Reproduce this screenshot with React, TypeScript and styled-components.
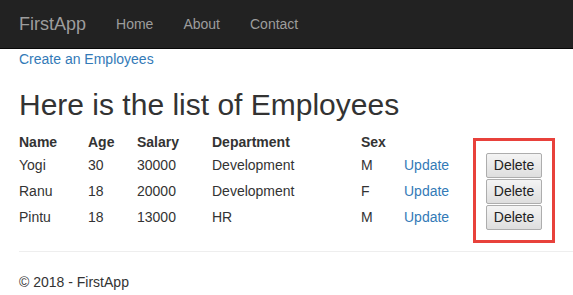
import styled, { createGlobalStyle } from "styled-components";

type Employee = {
  name: string;
  age: number;
  salary: number;
  department: string;
  sex: string;
};

const employees: Employee[] = [
  { name: "Yogi", age: 30, salary: 30000, department: "Development", sex: "M" },
  { name: "Ranu", age: 18, salary: 20000, department: "Development", sex: "F" },
  { name: "Pintu", age: 18, salary: 13000, department: "HR", sex: "M" },
];

const columns = [
  { label: "Name", width: 69 },
  { label: "Age", width: 49 },
  { label: "Salary", width: 75 },
  { label: "Department", width: 149 },
  { label: "Sex", width: 43 },
  { label: "", width: 82 },
  { label: "", width: 70 },
];

const GlobalStyle = createGlobalStyle`
  html, body {
    margin: 0;
    padding: 0;
    background: #ffffff;
    font-family: "Liberation Sans", Arial, Helvetica, sans-serif;
    font-size: 14px;
    line-height: 20px;
    color: #333333;
  }
  * {
    box-sizing: border-box;
  }
`;

const Navbar = styled.nav`
  height: 49px;
  background: #222222;
  border-bottom: 1px solid #080808;
  display: flex;
  align-items: center;
  padding-left: 19px;
`;

const Brand = styled.a`
  font-size: 18px;
  line-height: 20px;
  color: #9d9d9d;
  padding-right: 15px;
  text-decoration: none;
`;

const NavLink = styled.a`
  font-size: 14px;
  line-height: 20px;
  color: #9d9d9d;
  padding: 0 15px;
  text-decoration: none;
`;

const Content = styled.main`
  padding-left: 19px;
`;

const TopLink = styled.p`
  margin: 0 0 10px;
`;

const Link = styled.a`
  color: #337ab7;
  text-decoration: none;
`;

const Heading = styled.h2`
  margin: 19px 0 11px;
  font-size: 30px;
  font-weight: 500;
  line-height: 33px;
`;

const TableWrap = styled.div`
  position: relative;
  margin-bottom: 21px;
`;

const Table = styled.table`
  border-collapse: collapse;
  border-spacing: 0;
`;

const HeadCell = styled.th<{ $width: number }>`
  width: ${({ $width }) => $width}px;
  padding: 0;
  height: 20px;
  text-align: left;
  font-weight: 700;
  vertical-align: middle;
`;

const Cell = styled.td`
  padding: 0;
  height: 26px;
  vertical-align: middle;
`;

const DeleteButton = styled.button`
  width: 56px;
  height: 25px;
  padding: 0;
  font-family: "Liberation Sans", Arial, sans-serif;
  font-size: 14px;
  color: #222222;
  background: linear-gradient(#f4f4f4, #dedede);
  border: 1px solid #adadad;
  border-radius: 2px;
  vertical-align: middle;
`;

const Highlight = styled.div`
  position: absolute;
  left: 454px;
  top: 6px;
  width: 82px;
  height: 105px;
  border: 3px solid #e8413b;
  pointer-events: none;
`;

const Divider = styled.hr`
  margin: 0 0 20px;
  border: 0;
  border-top: 1px solid #eeeeee;
`;

const Footer = styled.footer`
  p {
    margin: 0;
  }
`;

export default function App() {
  return (
    <>
      <GlobalStyle />
      <Navbar>
        <Brand href="#">FirstApp</Brand>
        <NavLink href="#">Home</NavLink>
        <NavLink href="#">About</NavLink>
        <NavLink href="#">Contact</NavLink>
      </Navbar>
      <Content>
        <TopLink>
          <Link href="#">Create an Employees</Link>
        </TopLink>
        <Heading>Here is the list of Employees</Heading>
        <TableWrap>
          <Table>
            <thead>
              <tr>
                {columns.map((c, i) => (
                  <HeadCell key={i} $width={c.width}>
                    {c.label}
                  </HeadCell>
                ))}
              </tr>
            </thead>
            <tbody>
              {employees.map((e) => (
                <tr key={e.name}>
                  <Cell>{e.name}</Cell>
                  <Cell>{e.age}</Cell>
                  <Cell>{e.salary}</Cell>
                  <Cell>{e.department}</Cell>
                  <Cell>{e.sex}</Cell>
                  <Cell>
                    <Link href="#">Update</Link>
                  </Cell>
                  <Cell>
                    <DeleteButton type="button">Delete</DeleteButton>
                  </Cell>
                </tr>
              ))}
            </tbody>
          </Table>
          <Highlight />
        </TableWrap>
        <Divider />
        <Footer>
          <p>© 2018 - FirstApp</p>
        </Footer>
      </Content>
    </>
  );
}
